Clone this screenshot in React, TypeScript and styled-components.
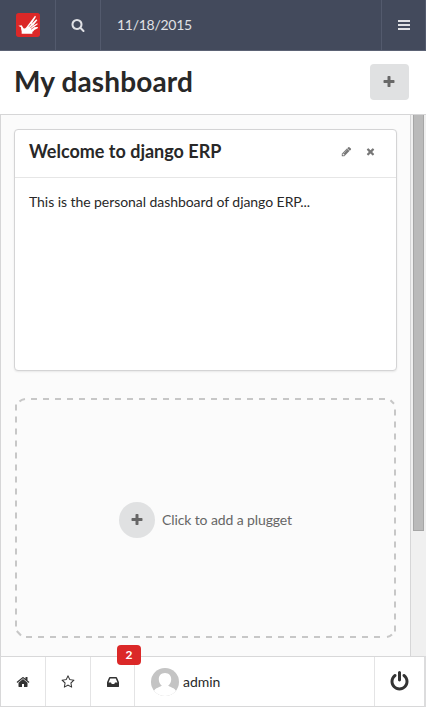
import React from "react";
import styled, { createGlobalStyle } from "styled-components";

const GlobalStyle = createGlobalStyle`
  * { box-sizing: border-box; }
  html, body { margin: 0; height: 100%; background: #fff; }
  body {
    font-family: Lato, "Liberation Sans", sans-serif;
    font-size: 14px;
    line-height: 20px;
    color: #282828;
    overflow: hidden;
  }
`;

const paths = {
  search:
    "M1216 832q0-185-131.5-316.5t-316.5-131.5-316.5 131.5-131.5 316.5 131.5 316.5 316.5 131.5 316.5-131.5 131.5-316.5zm512 832q0 52-38 90t-90 38q-54 0-90-38l-343-342q-179 124-399 124-143 0-273.5-55.5t-225-150-150-225-55.5-273.5 55.5-273.5 150-225 225-150 273.5-55.5 273.5 55.5 225 150 150 225 55.5 273.5q0 220-124 399l343 343q37 37 37 90z",
  plus: "M1600 736v192q0 40-28 68t-68 28h-416v416q0 40-28 68t-68 28h-192q-40 0-68-28t-28-68v-416h-416q-40 0-68-28t-28-68v-192q0-40 28-68t68-28h416v-416q0-40 28-68t68-28h192q40 0 68 28t28 68v416h416q40 0 68 28t28 68z",
  home: "M1472 992v480q0 26-19 45t-45 19h-384v-384h-256v384h-384q-26 0-45-19t-19-45v-480q0-1 .5-3t.5-3l575-474 575 474q1 2 1 6zm223-69l-62 74q-8 9-21 11h-3q-13 0-21-7l-692-577-692 577q-12 8-24 7-13-2-21-11l-62-74q-8-10-7-23.5t11-21.5l719-599q32-26 76-26t76 26l244 204v-195q0-14 9-23t23-9h192q14 0 23 9t9 23v408l219 182q10 8 11 21.5t-7 23.5z",
  star: "M1201 1004l306-297-422-62-189-382-189 382-422 62 306 297-73 421 378-199 377 199zm527-357q0 22-26 48l-363 354 86 500q1 7 1 20 0 50-41 50-19 0-40-12l-449-236-449 236q-22 12-40 12-21 0-31.5-14.5t-10.5-35.5q0-6 2-20l86-500-364-354q-25-27-25-48 0-37 56-46l502-73 225-455q19-41 49-41t49 41l225 455 502 73q56 9 56 46z",
  inbox:
    "M1151 960h316q-1-3-2.5-8t-2.5-8l-212-496h-708l-212 496q-1 2-2.5 8t-2.5 8h316l95 192h320zm513 30v482q0 26-19 45t-45 19h-1408q-26 0-45-19t-19-45v-482q0-62 25-123l238-552q10-25 36.5-42t52.5-17h832q26 0 52.5 17t36.5 42l238 552q25 61 25 123z",
  power:
    "M1664 896q0 156-61 298t-164 245-245 164-298 61-298-61-245-164-164-245-61-298q0-182 80.5-343t226.5-270q43-32 95.5-25t83.5 50q32 42 24.5 94.5t-49.5 84.5q-98 74-151.5 181t-53.5 228q0 104 40.5 198.5t109.5 163.5 163.5 109.5 198.5 40.5 198.5-40.5 163.5-109.5 109.5-163.5 40.5-198.5q0-121-53.5-228t-151.5-181q-42-32-49.5-84.5t24.5-94.5q31-43 84-50t95 25q146 109 226.5 270t80.5 343zm-640-768v640q0 52-38 90t-90 38-90-38-38-90v-640q0-52 38-90t90-38 90 38 38 90z",
  pencil:
    "M491 1536l91-91-235-235-91 91v107h128v128h107zm523-928q0-22-22-22-10 0-17 7l-542 542q-7 7-7 17 0 22 22 22 10 0 17-7l542-542q7-7 7-17zm-54-192l416 416-832 832h-416v-416zm683 96q0 53-37 90l-166 166-416-416 166-165q36-38 90-38 53 0 91 38l235 234q37 39 37 91z",
  times:
    "M1490 1322q0 40-28 68l-136 136q-28 28-68 28t-68-28l-294-294-294 294q-28 28-68 28t-68-28l-136-136q-28-28-28-68t28-68l294-294-294-294q-28-28-28-68t28-68l136-136q28-28 68-28t68 28l294 294 294-294q28-28 68-28t68 28l136 136q28 28 28 68t-28 68l-294 294 294 294q28 28 28 68z",
};

const Glyph = styled.svg<{ $size: number }>`
  display: block;
  flex: none;
  width: ${(p) => p.$size}px;
  height: ${(p) => p.$size}px;
  fill: currentColor;
`;

function Icon({ name, size = 14 }: { name: keyof typeof paths; size?: number }) {
  return (
    <Glyph $size={size} viewBox="0 0 1792 1792" aria-hidden="true">
      <path d={paths[name]} />
    </Glyph>
  );
}

const Page = styled.div`
  display: flex;
  flex-direction: column;
  height: 707px;
  width: 426px;
`;

const TopBar = styled.nav`
  display: flex;
  flex: none;
  height: 51px;
  background: #434a5c;
  border-bottom: 1px solid #5b6274;
  color: #e0e1e5;
`;

const TopItem = styled.div<{ $width?: number }>`
  display: flex;
  align-items: center;
  justify-content: center;
  width: ${(p) => (p.$width ? `${p.$width}px` : "auto")};
  flex: ${(p) => (p.$width ? "none" : "1")};
  border-right: 1px solid #535a6d;
`;

const DateItem = styled(TopItem)`
  justify-content: flex-start;
  padding-left: 16px;
  letter-spacing: -0.28px;
`;

const TitleBar = styled.header`
  display: flex;
  flex: none;
  align-items: center;
  justify-content: space-between;
  height: 63px;
  padding: 0 17px 2px 14px;
`;

const Title = styled.h1`
  margin: 0;
  padding-bottom: 2px;
  font-size: 28px;
  line-height: 36px;
  font-weight: 700;
  letter-spacing: 0.13px;
`;

const AddButton = styled.button`
  display: flex;
  align-items: center;
  justify-content: center;
  width: 39px;
  height: 36px;
  padding: 0 1px 0 0;
  border: 0;
  border-radius: 4px;
  background: #e0e1e2;
  color: #686868;
`;

const Body = styled.div`
  display: flex;
  flex: none;
  height: 542px;
  border-top: 1px solid #d6d6d7;
`;

const Content = styled.main`
  display: flex;
  flex-direction: column;
  gap: 27px;
  width: 411px;
  padding: 14px 13px 0 13px;
  background: #fbfbfb;
  border-left: 1px solid #d6d6d7;
  border-right: 1px solid #d6d6d7;
`;

const ScrollTrack = styled.div`
  flex: 1;
  padding-left: 2px;
  background: #f0f0f0;
`;

const ScrollThumb = styled.div`
  width: 11px;
  height: 416px;
  background: #bababa;
  border: 1px solid #a6a6a6;
  border-top: 0;
`;

const Card = styled.section`
  height: 242px;
  background: #fff;
  border: 1px solid #d4d4d5;
  border-radius: 4px;
  box-shadow: 0 1px 2px rgba(0, 0, 0, 0.08);
`;

const CardHead = styled.div`
  display: flex;
  align-items: center;
  height: 48px;
  padding: 0 20px 4px 14px;
  border-bottom: 1px solid #e6e6e6;
`;

const CardTitle = styled.h3`
  flex: 1;
  margin: 0;
  padding-bottom: 2px;
  font-size: 18px;
  line-height: 24px;
  font-weight: 700;
`;

const CardActions = styled.div`
  display: flex;
  gap: 13px;
  color: #777;
`;

const CardText = styled.p`
  margin: 0;
  padding: 14px;
  letter-spacing: -0.06px;
`;

const Placeholder = styled.section`
  position: relative;
  display: flex;
  align-items: center;
  justify-content: center;
  gap: 7px;
  height: 242px;
  padding-top: 2px;
  color: #666;
  letter-spacing: -0.11px;
`;

const DashedOutline = styled.svg`
  position: absolute;
  inset: 0;
  width: 383px;
  height: 242px;
  fill: none;
  stroke: #c7c7c7;
  stroke-width: 2;
`;

const RoundPlus = styled.span`
  display: flex;
  align-items: center;
  justify-content: center;
  width: 36px;
  height: 36px;
  border-radius: 50%;
  background: #e0e1e2;
`;

const BottomBar = styled.footer`
  display: flex;
  flex: none;
  height: 51px;
  background: #fff;
  border: 1px solid #d8d8d9;
  border-right: 2px solid #dcdcdd;
`;

const BottomItem = styled.div<{ $width: number }>`
  position: relative;
  display: flex;
  align-items: center;
  justify-content: center;
  width: ${(p) => p.$width}px;
  border-right: 1px solid #e4e4e5;
  color: #333;
`;

const Badge = styled.span`
  position: absolute;
  top: -12px;
  left: 26px;
  width: 24px;
  height: 20px;
  border-radius: 4px;
  background: #db2828;
  color: #fff;
  font-size: 12px;
  font-weight: 700;
  line-height: 20px;
  text-align: center;
`;

const UserItem = styled.div`
  display: flex;
  flex: 1;
  align-items: center;
  gap: 4px;
  padding-left: 16px;
  border-right: 1px solid #e4e4e5;
  letter-spacing: -0.06px;
`;

const PowerItem = styled.div`
  display: flex;
  align-items: center;
  justify-content: center;
  width: 49px;
  color: #333;
`;

function Logo() {
  return (
    <svg width="24" height="24" viewBox="0 0 72 72" aria-label="django ERP">
      <rect width="72" height="72" rx="8" fill="#db2828" />
      <path
        fill="#fff"
        d="M7 38L17 37L22 45Q26 49 31 43L57 8L60 11L46 34L61 19L64 22L51 38L64 31L65 34L53 43L65 42L66 45L55 51Q52 56 49 57V62H17V55Q15 49 15 43Z"
      />
      <path stroke="#db2828" strokeWidth="2" d="M39 41L45 33M43 45L51 37M45 49L54 43" />
    </svg>
  );
}

function Avatar() {
  return (
    <svg width="28" height="28" viewBox="0 0 28 28" aria-hidden="true">
      <defs>
        <clipPath id="avatar-disc">
          <circle cx="14" cy="14" r="14" />
        </clipPath>
      </defs>
      <g clipPath="url(#avatar-disc)">
        <rect width="28" height="28" fill="#c4c4c4" />
        <path
          fill="#fff"
          d="M14 5C10 5 7.8 7.8 7.8 11.2C7.8 14.2 9 16.3 10.8 17.6C10.2 19.3 3.5 19.5 2.6 24V28H25.4V24C24.5 19.5 17.8 19.3 17.2 17.6C19 16.3 20.2 14.2 20.2 11.2C20.2 7.8 18 5 14 5Z"
        />
      </g>
    </svg>
  );
}

export default function App() {
  return (
    <>
      <GlobalStyle />
      <Page>
        <TopBar>
          <TopItem $width={56}>
            <Logo />
          </TopItem>
          <TopItem $width={45}>
            <Icon name="search" />
          </TopItem>
          <DateItem>11/18/2015</DateItem>
          <TopItem $width={44}>
            <svg width="12" height="10" viewBox="0 0 12 10" fill="currentColor" aria-label="Menu">
              <path d="M0 0h12v2H0zM0 4h12v2H0zM0 8h12v2H0z" />
            </svg>
          </TopItem>
        </TopBar>
        <TitleBar>
          <Title>My dashboard</Title>
          <AddButton aria-label="Add">
            <Icon name="plus" />
          </AddButton>
        </TitleBar>
        <Body>
          <Content>
            <Card>
              <CardHead>
                <CardTitle>Welcome to django ERP</CardTitle>
                <CardActions>
                  <Icon name="pencil" size={11} />
                  <Icon name="times" size={11} />
                </CardActions>
              </CardHead>
              <CardText>This is the personal dashboard of django ERP...</CardText>
            </Card>
            <Placeholder>
              <DashedOutline viewBox="14 398 383 242" aria-hidden="true">
                <path d="M31 399H386M26 637H381M16 404.5V627M395 409.5V632" strokeDasharray="6 6" />
                <path d="M19.5 401.5Q21.5 399.5 25 399M390.5 400.3L394 403.8M16.8 631L21 635.5M387 637Q390 636.5 392 634.5" />
              </DashedOutline>
              <RoundPlus>
                <Icon name="plus" />
              </RoundPlus>
              <span>Click to add a plugget</span>
            </Placeholder>
          </Content>
          <ScrollTrack>
            <ScrollThumb />
          </ScrollTrack>
        </Body>
        <BottomBar>
          <BottomItem $width={45}>
            <Icon name="home" />
          </BottomItem>
          <BottomItem $width={45}>
            <Icon name="star" />
          </BottomItem>
          <BottomItem $width={44}>
            <Icon name="inbox" />
            <Badge>2</Badge>
          </BottomItem>
          <UserItem>
            <Avatar />
            <span>admin</span>
          </UserItem>
          <PowerItem>
            <Icon name="power" size={21} />
          </PowerItem>
        </BottomBar>
      </Page>
    </>
  );
}
